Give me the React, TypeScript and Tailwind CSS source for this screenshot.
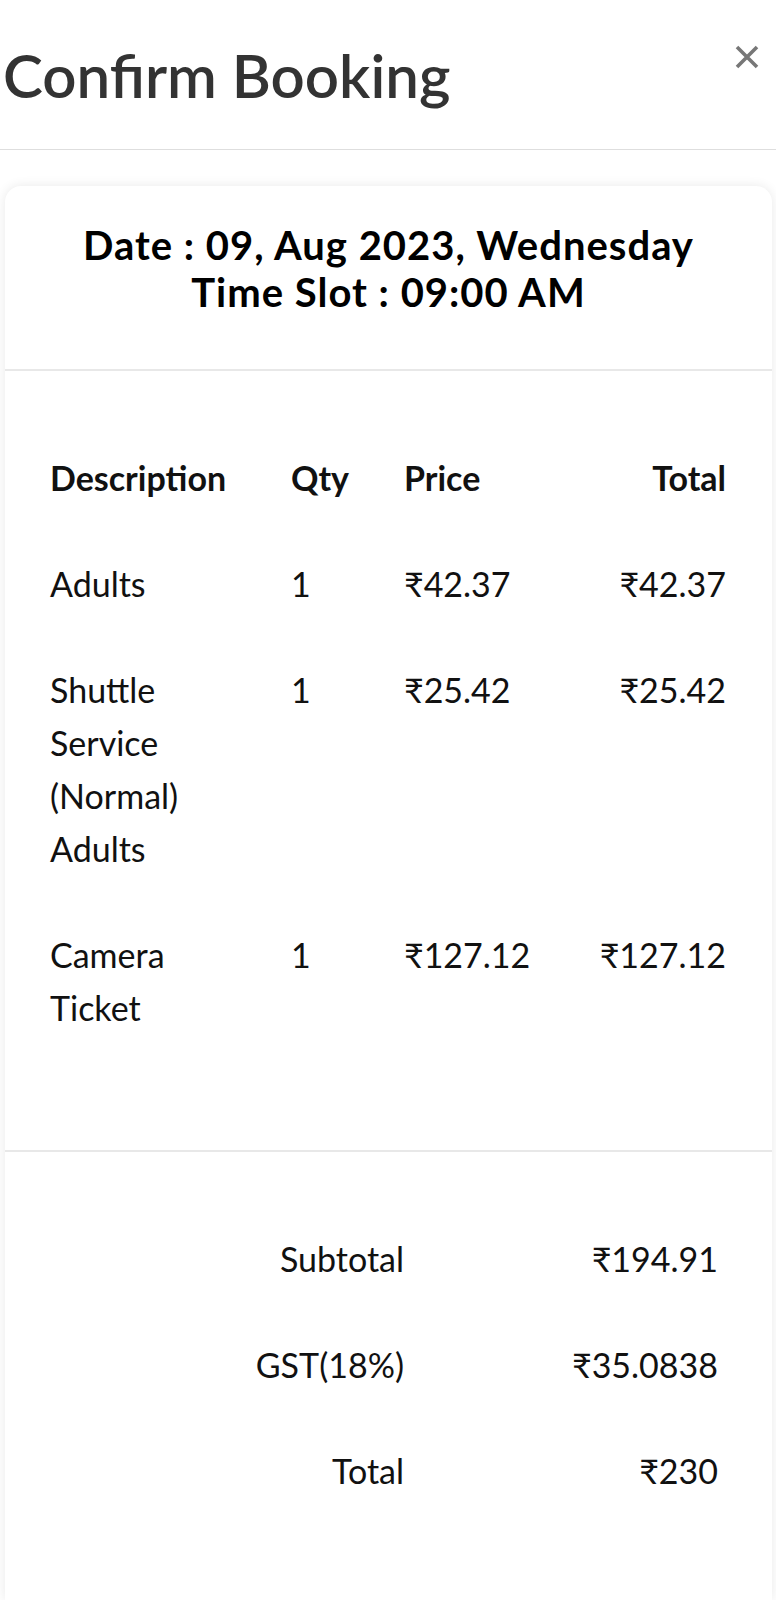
const items = [
  { desc: 'Adults', qty: 1, price: '₹42.37', total: '₹42.37' },
  { desc: 'Shuttle Service (Normal) Adults', qty: 1, price: '₹25.42', total: '₹25.42' },
  { desc: 'Camera Ticket', qty: 1, price: '₹127.12', total: '₹127.12' },
]

const summary = [
  { label: 'Subtotal', value: '₹194.91' },
  { label: 'GST(18%)', value: '₹35.0838' },
  { label: 'Total', value: '₹230' },
]

function CloseIcon() {
  return (
    <svg width="24" height="24" viewBox="0 0 24 24" className="text-[#777]">
      <path d="M2 2L22 22M22 2L2 22" stroke="currentColor" strokeWidth="3.6" strokeLinecap="butt" />
    </svg>
  )
}

export default function App() {
  return (
    <div className="flex min-h-[1600px] w-full flex-col bg-white font-['Lato','Noto_Sans',sans-serif]">
      <header className="flex h-[150px] shrink-0 items-start justify-between border-b border-[#dedede] pl-[3px] pr-[17px]">
        <h1 className="mt-[40px] text-[60px] font-semibold leading-[70px] text-[#333]">Confirm Booking</h1>
        <button className="mt-[45px]" aria-label="Close">
          <CloseIcon />
        </button>
      </header>

      <div className="ml-[5px] mr-[4px] mt-[36px] flex-1 rounded-t-[16px] bg-white shadow-[0_0_12px_rgba(0,0,0,0.09)]">
        <div className="border-b-2 border-[#e8e8e8] pb-[53px] pt-[36px] text-center text-[40px] font-bold leading-[47px] tracking-[1px] text-black">
          <p>Date : 09, Aug 2023, Wednesday</p>
          <p>Time Slot : 09:00 AM</p>
        </div>

        <div className="border-b-2 border-[#e8e8e8] pb-[116px] pl-[45px] pr-[46px] pt-[80px] text-[34px] leading-[53px] text-[#111]">
          <div className="grid grid-cols-[241px_113px_1fr_160px] gap-y-[53px]">
            <div className="font-bold">Description</div>
            <div className="font-bold">Qty</div>
            <div className="font-bold">Price</div>
            <div className="text-right font-bold">Total</div>
            {items.map((it) => (
              <div key={it.desc} className="contents">
                <div className="pr-[70px]">{it.desc}</div>
                <div>{it.qty}</div>
                <div>{it.price}</div>
                <div className="text-right">{it.total}</div>
              </div>
            ))}
          </div>
        </div>

        <div className="pb-[80px] pl-[45px] pr-[54px] pt-[80px] text-[34px] leading-[53px] text-[#111]">
          <div className="grid grid-cols-[1fr_314px] gap-y-[53px] text-right">
            {summary.map((s) => (
              <div key={s.label} className="contents">
                <div>{s.label}</div>
                <div>{s.value}</div>
              </div>
            ))}
          </div>
        </div>
      </div>
    </div>
  )
}
